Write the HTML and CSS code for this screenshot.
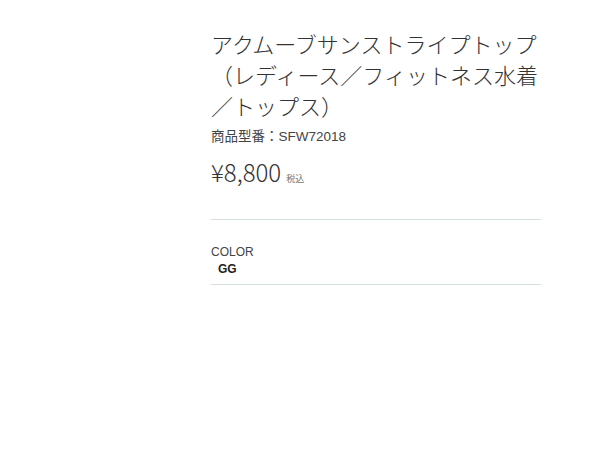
FILE: index.html
```html
<!DOCTYPE html>
<html lang="ja">
<head>
<meta charset="utf-8">
<link rel="stylesheet" href="styles.css">
</head>
<body>
<div class="product">
  <h1 class="title">アクムーブサンストライプトップ（レディース／フィットネス水着／トップス）</h1>
  <p class="code">商品型番：SFW72018</p>
  <p class="price"><span class="amount">¥8,800</span><span class="tax">税込</span></p>
  <div class="color">
    <div class="color-label">COLOR</div>
    <div class="color-value">GG</div>
  </div>
</div>
</body>
</html>
```
FILE: styles.css
```css
html, body {
  margin: 0;
  padding: 0;
  background: #fff;
}
body {
  font-family: "Noto Sans CJK JP", "Noto Sans", sans-serif;
  color: #333;
}
.product {
  width: 330px;
  margin-left: 211px;
  padding-top: 28px;
}
.title {
  margin: 0;
  font-size: 22px;
  font-weight: 300;
  line-height: 31px;
  letter-spacing: 0;
}
.code {
  margin: 7px 0 0;
  font-family: "Liberation Sans", "Noto Sans CJK JP", sans-serif;
  font-size: 13.5px;
  line-height: 18px;
  color: #444;
}
.price {
  margin: 11px 0 0;
  display: flex;
  align-items: baseline;
  gap: 5px;
}
.amount {
  font-size: 24px;
  font-weight: 300;
  line-height: 30px;
}
.tax {
  font-size: 9px;
  color: #777;
}
.color {
  margin-top: 32px;
  border-top: 1px solid #d4dde0;
  border-bottom: 1px solid #d4dde0;
  padding: 24px 0 6px;
}
.color-label {
  font-family: "Liberation Sans", sans-serif;
  font-size: 12px;
  line-height: 16px;
  color: #444;
}
.color-value {
  font-family: "Liberation Sans", sans-serif;
  font-size: 12px;
  font-weight: 700;
  line-height: 18px;
  padding-left: 7px;
  color: #222;
}
```
